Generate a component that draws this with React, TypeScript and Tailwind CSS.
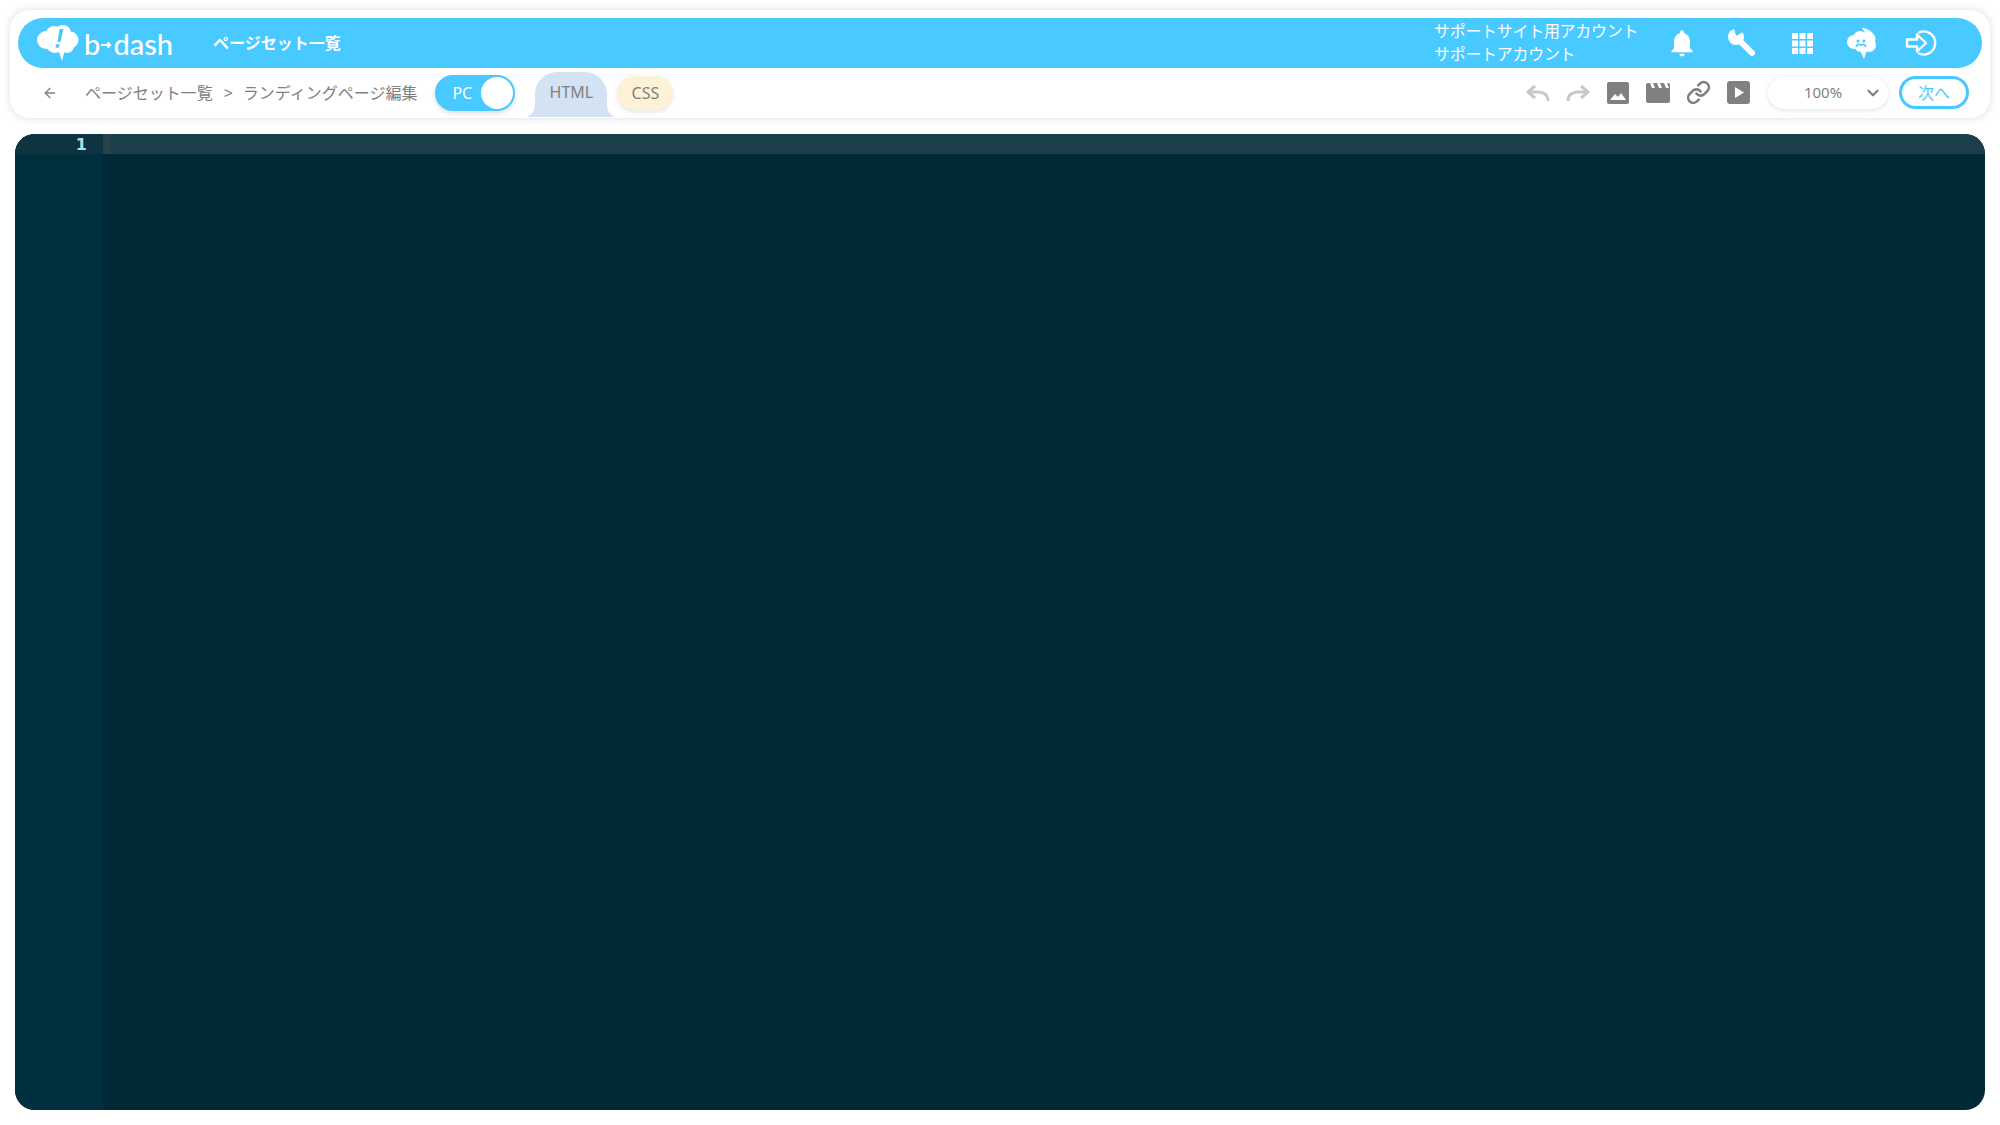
import React from "react";
import { ChevronDown, Link, ArrowLeft } from "lucide-react";

const FONT = "font-['Noto_Sans','Noto_Sans_CJK_JP',sans-serif]";

function BrainLogo() {
	return (
		<svg viewBox="0 0 42 36" className="h-[36px] w-[42px]">
			<g fill="#fff">
				<circle cx="9" cy="15" r="9" />
				<circle cx="17" cy="9" r="8" />
				<circle cx="26" cy="8" r="8" />
				<circle cx="33" cy="15" r="8.500" />
				<circle cx="30" cy="21" r="7" />
				<circle cx="18" cy="19" r="9" />
				<path d="M21 24h7l-3 12z" />
			</g>
			<path d="M22.500 4h4l-3 13h-3z" fill="#48c9ff" />
			<circle cx="20.500" cy="21" r="2" fill="#48c9ff" />
		</svg>
	);
}

function SmileBrain() {
	return (
		<svg viewBox="0 0 32 32" className="h-[32px] w-[32px]">
			<g fill="#fff">
				<circle cx="8" cy="15" r="7" />
				<circle cx="14" cy="11" r="7" />
				<circle cx="22" cy="12" r="7.500" />
				<circle cx="23" cy="18" r="7" />
				<circle cx="15" cy="18" r="7" />
				<path d="M14 23h7l-3 9z" />
				<path d="M16 1c4 0 9 2 11 7l-3 1c-3-2-6-4-8-8z" />
			</g>
			<circle cx="12" cy="14" r="1.500" fill="#48c9ff" />
			<circle cx="18" cy="14" r="1.500" fill="#48c9ff" />
			<path d="M10 20c1-3 3-3 5-2 2-1 4-1 5 2" stroke="#48c9ff" strokeWidth="1.600" fill="none" />
		</svg>
	);
}

function SignIn() {
	return (
		<svg viewBox="0 0 34 30" className="h-[30px] w-[34px]" fill="none" stroke="#fff" strokeWidth="2.400">
			<path d="M14 4.500a11.500 11.500 0 1 1 0 21" strokeLinecap="round" />
			<path d="M2 11.500h10V6.500l9 8.500-9 8.500v-5H2z" strokeLinejoin="round" />
		</svg>
	);
}

function BellIcon() {
	return (
		<svg viewBox="0 0 24 24" className="h-[32px] w-[32px]" fill="#fff">
			<path d="M12 22c1.100 0 2-.9 2-2h-4c0 1.100.9 2 2 2zm6-6v-5c0-3.070-1.630-5.640-4.500-6.320V4c0-.83-.67-1.500-1.500-1.500s-1.500.67-1.500 1.500v.68C7.640 5.360 6 7.920 6 11v5l-2 2v1h16v-1l-2-2z" />
		</svg>
	);
}

function WrenchIcon() {
	return (
		<svg viewBox="0 0 30 30" className="h-[30px] w-[30px]">
			<circle cx="9" cy="9" r="8" fill="#fff" />
			<path d="M10 10L25 25" stroke="#fff" strokeWidth="6" strokeLinecap="round" />
			<path d="M9 8L7 0h10l1 3z" fill="#48c9ff" />
		</svg>
	);
}

function GridIcon() {
	return (
		<svg viewBox="0 0 21 21" className="h-[21px] w-[21px]" fill="#fff">
			<rect x="0" y="0" width="6" height="6" />
			<rect x="7.500" y="0" width="6" height="6" />
			<rect x="15" y="0" width="6" height="6" />
			<rect x="0" y="7.500" width="6" height="6" />
			<rect x="7.500" y="7.500" width="6" height="6" />
			<rect x="15" y="7.500" width="6" height="6" />
			<rect x="0" y="15" width="6" height="6" />
			<rect x="7.500" y="15" width="6" height="6" />
			<rect x="15" y="15" width="6" height="6" />
		</svg>
	);
}

function UndoIcon({ flip }: { flip?: boolean }) {
	return (
		<svg viewBox="0 0 24 18" className={`h-[18px] w-[24px] ${flip ? "-scale-x-100" : ""}`} fill="none" stroke="#c8c8c8" strokeWidth="3">
			<path d="M9 2L2 8l7 6" strokeLinejoin="round" />
			<path d="M3 8h9c6 0 10 3 10 9" />
		</svg>
	);
}

function ImageIcon() {
	return (
		<svg viewBox="0 0 22 22" className="h-[22px] w-[22px]">
			<rect width="22" height="22" rx="2" fill="#808080" />
			<path d="M3 18l5-6 3 3 3-4 5 7z" fill="#fff" />
		</svg>
	);
}

function MovieIcon() {
	return (
		<svg viewBox="0 0 24 20" className="h-[20px] w-[24px]">
			<path d="M0 2a2 2 0 0 1 2-2h2l2 5h3L7 0h4l2 5h3l-2-5h4l2 5h3l-2-5h1a2 2 0 0 1 2 2v16a2 2 0 0 1-2 2H2a2 2 0 0 1-2-2z" fill="#808080" />
		</svg>
	);
}

function PlayIcon() {
	return (
		<svg viewBox="0 0 23 23" className="h-[23px] w-[23px]">
			<rect width="23" height="23" rx="3" fill="#808080" />
			<path d="M8 6l9 5.500-9 5.500z" fill="#fff" />
		</svg>
	);
}

export default function App() {
	return (
		<div className={`h-[1125px] w-[2000px] overflow-hidden bg-white ${FONT}`}>
			<div className="px-[10px] pt-[10px]">
				<div className="h-[108px] rounded-[20px] bg-white px-[8px] pt-[8px] shadow-[0_0_10px_rgba(0,0,0,0.14)]">
					<header className="flex h-[50px] items-center rounded-[25px] bg-[#48c9ff] pl-[19px] pr-[30px] text-white">
						<BrainLogo />
						<div className="ml-[5px] flex w-[89px] items-center font-['Lato',sans-serif] text-[29px] font-medium leading-none">
							<span>b</span>
							<svg viewBox="0 0 12 10" className="mx-[1px] mt-[4px] h-[10px] w-[12px]" fill="none" stroke="#fff" strokeWidth="2">
								<path d="M0 5h10M7 2l3 3-3 3" />
							</svg>
							<span>dash</span>
						</div>
						<span className="ml-[40px] text-[16px] font-bold">ページセット一覧</span>
						<div className="ml-auto w-[218px] text-[16px] leading-[23px] tracking-[-0.3px]">
							<p>サポートサイト用アカウント</p>
							<p>サポートアカウント</p>
						</div>
						<div className="flex items-center">
							<div className="flex w-[60px] justify-center"><BellIcon /></div>
							<div className="flex w-[60px] justify-center"><WrenchIcon /></div>
							<div className="flex w-[60px] justify-center"><GridIcon /></div>
							<div className="flex w-[60px] justify-center"><SmileBrain /></div>
							<div className="flex w-[60px] justify-center"><SignIn /></div>
						</div>
					</header>

					<div className="flex h-[50px] items-center pb-[1px] pl-[24px] pr-[13px] text-[#808080]">
						<ArrowLeft size={16} strokeWidth={2} />
						<span className="ml-[27px] text-[16px]">ページセット一覧</span>
						<span className="ml-[11px] text-[16px]">&gt;</span>
						<span className="ml-[10px] text-[16px]">ランディングページ編集</span>

						<div className="ml-[18px] flex h-[36px] w-[80px] items-center justify-between rounded-[18px] border-2 border-[#48c9ff] bg-[#48c9ff] pl-[15px] shadow-[0_2px_5px_rgba(0,0,0,0.15)]">
							<span className="text-[16px] text-white">PC</span>
							<span className="h-[32px] w-[32px] rounded-full bg-white" />
						</div>

						<div className="relative ml-[20px] flex h-[45px] w-[72px] items-center justify-center self-end rounded-t-[22px] bg-[#d3e3f3] pb-[5px] text-[16px]">
							HTML
							<svg viewBox="0 0 10 12" className="absolute bottom-0 left-[-10px] h-[12px] w-[10px]" fill="#d3e3f3">
								<path d="M10 0v12H0c5 0 10-5 10-12z" />
							</svg>
							<svg viewBox="0 0 10 12" className="absolute bottom-0 right-[-10px] h-[12px] w-[10px]" fill="#d3e3f3">
								<path d="M0 0v12h10C5 12 0 7 0 0z" />
							</svg>
						</div>
						<div className="ml-[10px] flex h-[34px] w-[56px] items-center justify-center rounded-[17px] bg-[#fdf2d5] text-[16px] shadow-[0_2px_4px_rgba(0,0,0,0.1)]">
							CSS
						</div>

						<div className="ml-auto flex items-center">
							<div className="flex w-[40px] justify-center"><UndoIcon /></div>
							<div className="flex w-[40px] justify-center"><UndoIcon flip /></div>
							<div className="flex w-[40px] justify-center"><ImageIcon /></div>
							<div className="flex w-[40px] justify-center"><MovieIcon /></div>
							<div className="flex w-[40px] justify-center"><Link size={25} strokeWidth={2.5} /></div>
							<div className="flex w-[40px] justify-center"><PlayIcon /></div>
						</div>

						<div className="relative ml-[10px] flex h-[32px] w-[120px] items-center justify-center rounded-[16px] bg-white pr-[10px] text-[15px] shadow-[0_1px_5px_rgba(0,0,0,0.12)]">
							100%
							<ChevronDown size={18} strokeWidth={3} className="absolute right-[6px]" />
						</div>
						<button className="ml-[11px] h-[33px] w-[70px] rounded-[17px] border-[3px] border-[#48c9ff] text-[16px] leading-none text-[#48c9ff]">
							次へ
						</button>
					</div>
				</div>
			</div>

			<div className="mx-[15px] mt-[16px] flex h-[976px] overflow-hidden rounded-[20px] bg-[#002b36]">
				<div className="w-[88px] bg-[#00303d]">
					<div className="h-[20px] bg-[#0e3441] pr-[16px] text-right font-['DejaVu_Sans',sans-serif] text-[16px] font-bold leading-[22px] text-[#b5dce6]">1</div>
				</div>
				<div className="flex-1">
					<div className="h-[20px] border-l-[7px] border-[#2c4049] bg-[#1b404a]" />
				</div>
			</div>
		</div>
	);
}
